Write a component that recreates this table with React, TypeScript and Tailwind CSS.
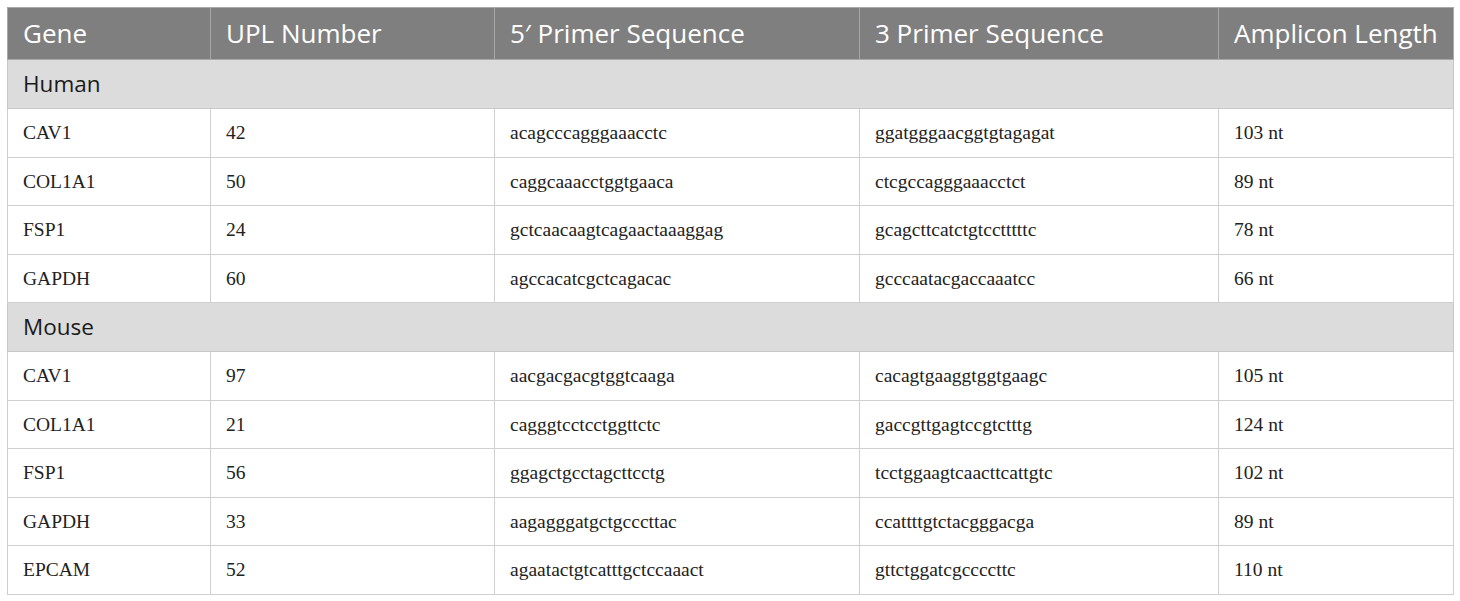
const header = ["Gene", "UPL Number", "5′ Primer Sequence", "3 Primer Sequence", "Amplicon Length"];

type Row = [string, string, string, string, string];

const sections: { name: string; rows: Row[] }[] = [
  {
    name: "Human",
    rows: [
      ["CAV1", "42", "acagcccagggaaacctc", "ggatgggaacggtgtagagat", "103 nt"],
      ["COL1A1", "50", "caggcaaacctggtgaaca", "ctcgccagggaaacctct", "89 nt"],
      ["FSP1", "24", "gctcaacaagtcagaactaaaggag", "gcagcttcatctgtcctttttc", "78 nt"],
      ["GAPDH", "60", "agccacatcgctcagacac", "gcccaatacgaccaaatcc", "66 nt"],
    ],
  },
  {
    name: "Mouse",
    rows: [
      ["CAV1", "97", "aacgacgacgtggtcaaga", "cacagtgaaggtggtgaagc", "105 nt"],
      ["COL1A1", "21", "cagggtcctcctggttctc", "gaccgttgagtccgtctttg", "124 nt"],
      ["FSP1", "56", "ggagctgcctagcttcctg", "tcctggaagtcaacttcattgtc", "102 nt"],
      ["GAPDH", "33", "aagagggatgctgcccttac", "ccattttgtctacgggacga", "89 nt"],
      ["EPCAM", "52", "agaatactgtcatttgctccaaact", "gttctggatcgccccttc", "110 nt"],
    ],
  },
];

export default function App() {
  return (
    <div className="w-[1460px] h-[601px] bg-white p-[7px]">
      <table className="w-[1446px] border-collapse table-fixed">
        <colgroup>
          <col className="w-[203px]" />
          <col className="w-[284px]" />
          <col className="w-[365px]" />
          <col className="w-[359px]" />
          <col className="w-[235px]" />
        </colgroup>
        <thead>
          <tr className="h-[52px] bg-[#7f7f7f]">
            {header.map((h) => (
              <th
                key={h}
                className="border border-[#a8a8a8] px-[15px] pb-[1px] text-left font-normal text-white text-[26px] font-['Open_Sans',sans-serif]"
              >
                {h}
              </th>
            ))}
          </tr>
        </thead>
        <tbody>
          {sections.map((s) => (
            <>
              <tr key={s.name} className="h-[49px] bg-[#dcdcdc]">
                <td
                  colSpan={5}
                  className="border border-[#c8c8c8] px-[15px] text-[22.5px] text-[#1a1a1a] font-['Open_Sans',sans-serif]"
                >
                  {s.name}
                </td>
              </tr>
              {s.rows.map((r, i) => (
                <tr key={s.name + i} className="h-[48.5px]">
                  {r.map((c, j) => (
                    <td
                      key={j}
                      className="border border-[#cfcfcf] px-[15px] text-[19.5px] text-[#222] font-['Liberation_Serif',serif]"
                    >
                      {c}
                    </td>
                  ))}
                </tr>
              ))}
            </>
          ))}
        </tbody>
      </table>
    </div>
  );
}
